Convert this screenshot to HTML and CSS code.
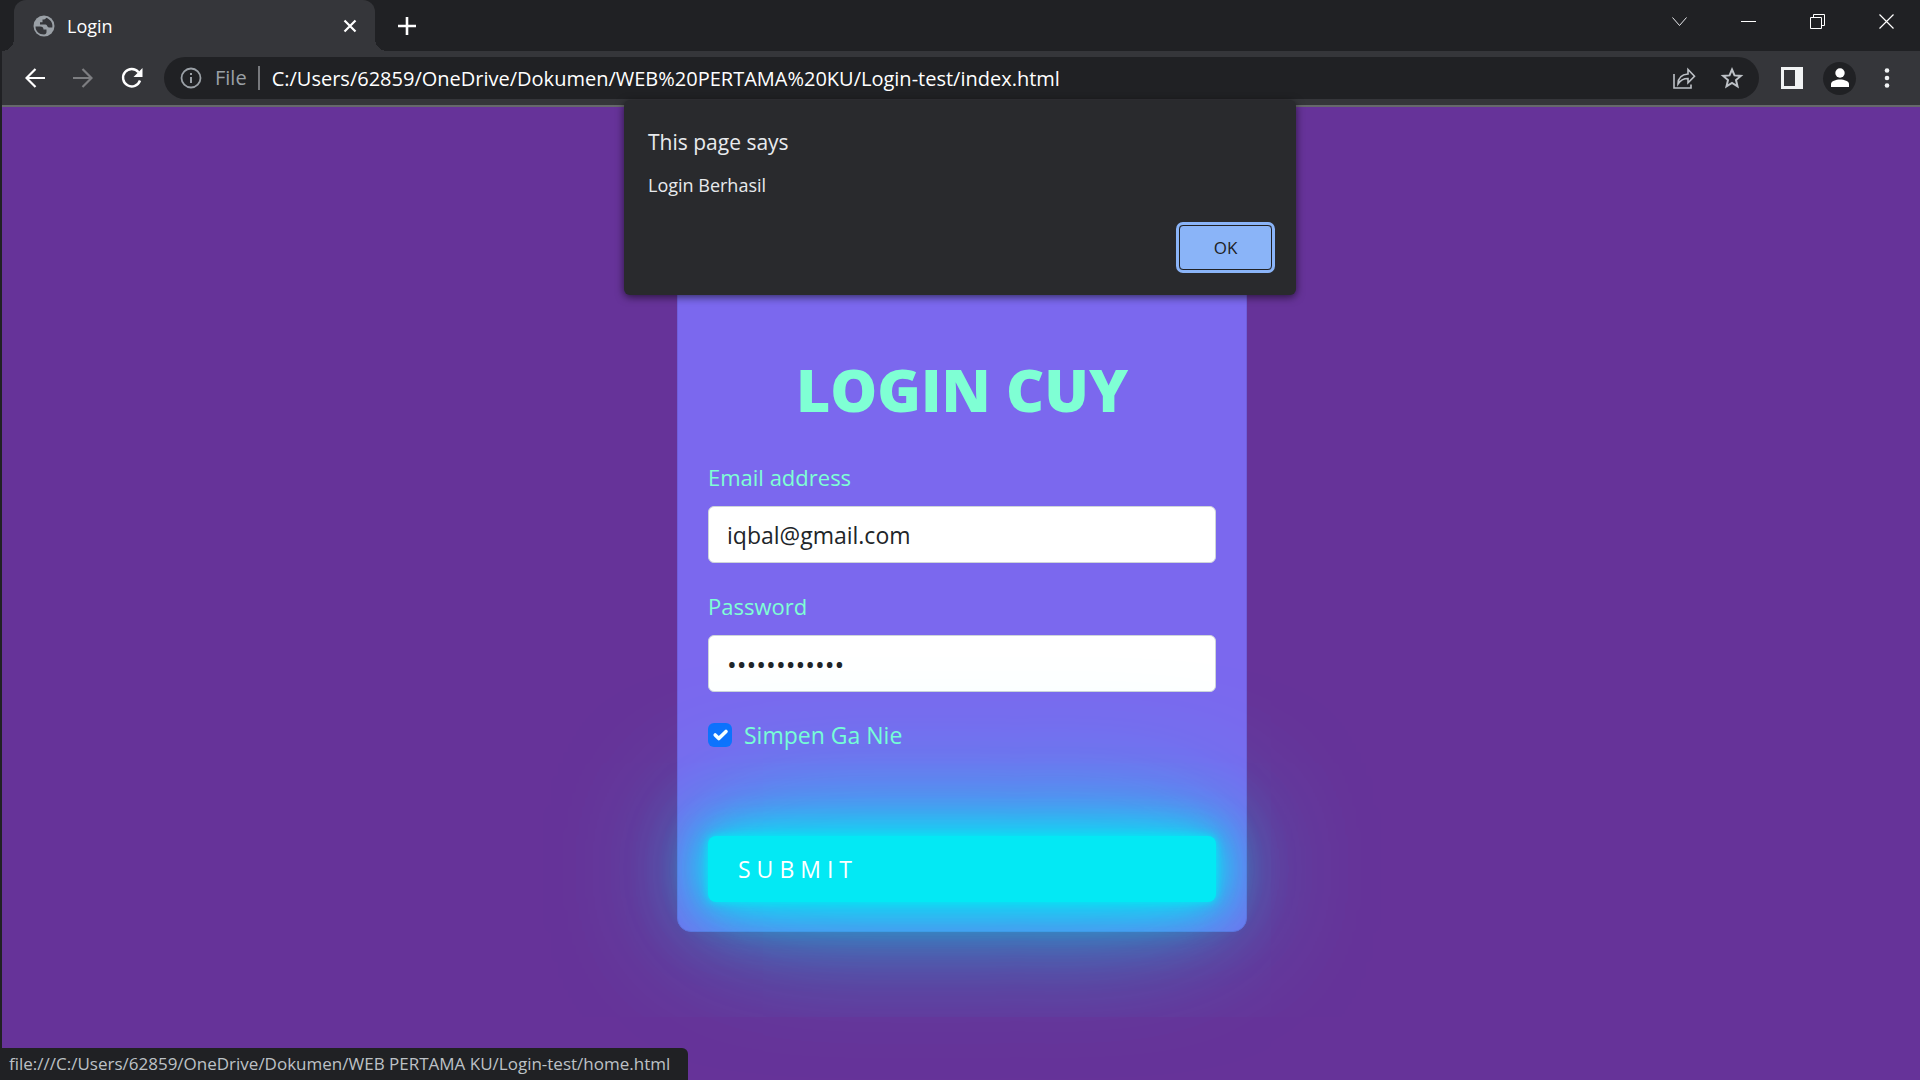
FILE: index.html
```html
<!DOCTYPE html>
<html lang="id">
<head>
<meta charset="utf-8">
<meta name="viewport" content="width=device-width, initial-scale=1">
<title>Login</title>
<link rel="stylesheet" href="styles.css">
</head>
<body>
<div class="window">
  <header class="chrome">
    <div class="tab-strip">
      <div class="tab">
        <svg class="tab-globe" viewBox="0 0 22 22" width="22" height="22" aria-hidden="true"><circle cx="11" cy="11" r="10.500" fill="#9aa0a6"/><path d="M2.500 11.500h4.500c2.500 0 3.500 1 3.500 3h3v2.500c0 1.500-1 2.500-2.500 2.500-5 0-8.500-3.500-8.500-8zM13 2.800c-.3 1.700-1.500 1.700-3.500 1.700v2.800H7v2.200h5.500c2 0 1.500 3 3.500 3h3.300C20.300 8 17 4 13 2.800z" fill="#35363a"/></svg>
        <span class="tab-title">Login</span>
        <button class="icon-button tab-close" aria-label="Close tab"><svg viewBox="0 0 14 14" width="14" height="14"><path d="M1.500 1.500l11 11M12.500 1.500l-11 11" stroke="#fff" stroke-width="2.200"/></svg></button>
      </div>
      <button class="icon-button new-tab" aria-label="New tab"><svg viewBox="0 0 18 18" width="18" height="18"><path d="M9 0v18M0 9h18" stroke="#fff" stroke-width="2.600"/></svg></button>
      <div class="window-controls">
        <button class="icon-button" aria-label="Search tabs"><svg viewBox="0 0 15 15" width="15" height="15"><path d="M.5 3.500l7 8 7-8" fill="none" stroke="#e8eaed"/></svg></button>
        <button class="icon-button" aria-label="Minimize"><svg viewBox="0 0 15 15" width="15" height="15"><path d="M0 7.500h15" stroke="#fff"/></svg></button>
        <button class="icon-button" aria-label="Restore"><svg viewBox="0 0 15 15" width="15" height="15"><path d="M.5 3.500h11v11H.5zM3.500 3.500v-3h11v11h-3" fill="none" stroke="#fff"/></svg></button>
        <button class="icon-button" aria-label="Close"><svg viewBox="0 0 15 15" width="15" height="15"><path d="M.5.5l14 14M14.500.5l-14 14" stroke="#fff" stroke-width="1.200"/></svg></button>
      </div>
    </div>
    <div class="toolbar">
      <nav class="history">
        <button class="icon-button" aria-label="Back"><svg viewBox="0 0 20 20" width="20" height="20"><path d="M20 10H2M10.500 1L1.500 10l9 9" fill="none" stroke="#fff" stroke-width="2.200"/></svg></button>
        <button class="icon-button" aria-label="Forward"><svg viewBox="0 0 20 20" width="20" height="20"><path d="M0 10h18M9.500 1l9 9-9 9" fill="none" stroke="#7d7e81" stroke-width="2.200"/></svg></button>
        <button class="icon-button" aria-label="Reload"><svg viewBox="0 0 22 22" width="22" height="22"><path d="M19 13.500a8.700 8.700 0 1 1-1.500-8.300" fill="none" stroke="#fff" stroke-width="2.400"/><path d="M21.500 1v9h-9z" fill="#fff"/></svg></button>
      </nav>
      <div class="address-bar">
        <svg viewBox="0 0 22 22" width="22" height="22" aria-hidden="true"><circle cx="11" cy="11" r="9.500" fill="none" stroke="#9aa0a6" stroke-width="1.800"/><path d="M11 10v6M11 6v2" stroke="#9aa0a6" stroke-width="2"/></svg>
        <span class="scheme">File</span>
        <input class="address" type="text" aria-label="Address" value="C:/Users/62859/OneDrive/Dokumen/WEB%20PERTAMA%20KU/Login-test/index.html">
        <button class="icon-button" aria-label="Share"><svg viewBox="0 0 24 24" width="24" height="24"><path d="M2 8v14h17v-3.500" fill="none" stroke="#bdc1c6" stroke-width="1.600"/><path d="M6 18c0-6 4-9.500 10-10V3.500l6.500 6.700-6.500 6.600V12.500c-4.500 0-7.500 1.500-10 5.500z" fill="none" stroke="#bdc1c6" stroke-width="1.600"/></svg></button>
        <button class="icon-button" aria-label="Bookmark"><svg viewBox="0 0 24 24" width="24" height="24"><path d="M12 3.500l2.500 5.900 6.400.5-4.900 4.200 1.500 6.200-5.500-3.300-5.500 3.300L8 14.100 3.100 9.900l6.400-.5z" fill="none" stroke="#bdc1c6" stroke-width="2"/></svg></button>
      </div>
      <div class="actions">
        <button class="icon-button" aria-label="Side panel"><svg viewBox="0 0 22 22" width="22" height="22"><path fill="#f1f3f4" fill-rule="evenodd" d="M0 0h22v22H0zM3 3v16h11V3z"/></svg></button>
        <button class="icon-button profile" aria-label="Profile"><svg viewBox="0 0 20 20" width="20" height="20"><circle cx="10" cy="5" r="4.700" fill="#fff"/><path d="M1 19v-3c0-3 5-4.500 9-4.500s9 1.500 9 4.500v3z" fill="#fff"/></svg></button>
        <button class="icon-button menu" aria-label="Menu"><svg viewBox="0 0 6 20" width="6" height="20"><g fill="#f1f3f4"><circle cx="3" cy="2.500" r="2.300"/><circle cx="3" cy="10" r="2.300"/><circle cx="3" cy="17.500" r="2.300"/></g></svg></button>
      </div>
    </div>
  </header>

  <main class="page">
    <form class="card">
      <h1 class="card-title">LOGIN CUY</h1>
      <div class="field">
        <label for="email">Email address</label>
        <input id="email" class="control" type="email" value="iqbal@gmail.com">
      </div>
      <div class="field">
        <label for="password">Password</label>
        <input id="password" class="control password" type="password" value="rahasia12345">
      </div>
      <div class="check">
        <input id="remember" type="checkbox" checked>
        <label for="remember">Simpen Ga Nie</label>
      </div>
      <button class="submit" type="button">SUBMIT</button>
    </form>
  </main>

  <div class="dialog" role="dialog" aria-labelledby="dialog-title">
    <h2 id="dialog-title">This page says</h2>
    <p>Login Berhasil</p>
    <button class="ok">OK</button>
  </div>

  <div class="status">file:///C:/Users/62859/OneDrive/Dokumen/WEB PERTAMA KU/Login-test/home.html</div>
</div>
</body>
</html>
```
FILE: styles.css
```css
* {
  box-sizing: border-box;
}

body {
  margin: 0;
  background: #202124;
  font-family: "Open Sans", "Noto Sans", sans-serif;
}

button,
input {
  font: inherit;
}

svg {
  display: block;
}

.window {
  position: relative;
  display: flex;
  flex-direction: column;
  min-height: 100vh;
}

.icon-button {
  display: flex;
  align-items: center;
  justify-content: center;
  padding: 0;
  border: 0;
  background: none;
}

/* Browser frame */
.chrome {
  margin-left: 2px;
  border-bottom: 2px solid #66686b;
}

.tab-strip {
  display: flex;
  height: 51px;
  padding-left: 12px;
}

.tab {
  position: relative;
  display: flex;
  align-items: center;
  gap: 12px;
  width: 361px;
  padding: 0 18px 0 19px;
  border-radius: 12px 12px 0 0;
  background: #35363a;
}

.tab::before,
.tab::after {
  content: "";
  position: absolute;
  bottom: 0;
  width: 12px;
  height: 12px;
}

.tab::before {
  right: 100%;
  background: radial-gradient(circle at 0 0, transparent 12px, #35363a 12px);
}

.tab::after {
  left: 100%;
  background: radial-gradient(circle at 100% 0, transparent 12px, #35363a 12px);
}

.tab-title {
  flex: 1;
  color: #fff;
  font-size: 18px;
}

.new-tab {
  margin-left: 23px;
}

.window-controls {
  display: flex;
  gap: 54px;
  height: 43px;
  margin-left: auto;
  padding-right: 26px;
}

.toolbar {
  display: flex;
  align-items: center;
  height: 54px;
  background: #35363a;
}

.history {
  display: flex;
  gap: 28px;
  padding: 0 21px 0 23px;
}

.address-bar {
  display: flex;
  flex: 1;
  align-items: center;
  gap: 24px;
  height: 42px;
  padding: 0 15px 0 16px;
  border-radius: 21px;
  background: #202124;
}

.scheme {
  margin-left: -11px;
  padding-right: 11px;
  border-right: 2px solid #77797d;
  color: #9aa0a6;
  font-size: 20px;
  line-height: 24px;
}

.address {
  flex: 1;
  min-width: 0;
  margin-left: -12px;
  padding: 0;
  border: 0;
  background: none;
  color: #fff;
  font-size: 20px;
}

.actions {
  display: flex;
  align-items: center;
  gap: 20px;
  padding: 0 22px;
}

.profile {
  width: 33px;
  height: 33px;
  border-radius: 50%;
  background: #202124;
}

.menu {
  width: 22px;
}

/* Login page */
.page {
  display: flex;
  flex: 1;
  align-items: flex-start;
  justify-content: center;
  overflow: hidden;
  margin-left: 2px;
  padding: 124px 0 0 2px;
  background: #663399;
}

.card {
  display: flex;
  flex-direction: column;
  width: 570px;
  padding: 121px 30px 29px;
  border: 1px solid #6f5fdb;
  border-radius: 14px;
  background: #7b68ee;
  color: #7fffd4;
  font-size: 23px;
  line-height: 36px;
}

.card-title {
  margin: 0 0 34px;
  font-size: 59px;
  font-weight: 800;
  line-height: 72px;
  text-align: center;
}

.field {
  display: flex;
  flex-direction: column;
  gap: 11px;
  margin-bottom: 25px;
}

.field label {
  font-size: 22px;
}

.control {
  height: 57px;
  padding: 0 18px;
  border: 1px solid #ced4da;
  border-radius: 6px;
  background: #fff;
  color: #212529;
}

.password {
  font-size: 26px;
}

.check {
  display: flex;
  align-items: center;
  gap: 12px;
  margin-bottom: 83px;
}

.check input {
  width: 24px;
  height: 24px;
  margin: 0;
  border-radius: 6px;
  appearance: none;
  background: #0d6efd url("data:image/svg+xml,%3Csvg xmlns='http://www.w3.org/2000/svg' viewBox='0 0 20 20'%3E%3Cpath fill='none' stroke='%23fff' stroke-linecap='round' stroke-linejoin='round' stroke-width='3' d='M6 10l3 3 6-6'/%3E%3C/svg%3E") center / 24px;
}

.submit {
  position: relative;
  height: 66px;
  padding: 0 30px;
  border: 0;
  border-radius: 8px;
  background: #03e9f4;
  box-shadow: 0 0 8px #03e9f4, 0 0 38px #03e9f4, 0 0 75px #03e9f4, 0 0 150px #03e9f4;
  color: #fff;
  letter-spacing: 6px;
  text-align: left;
}

/* Overlays */
.dialog {
  position: absolute;
  top: 100px;
  left: 50%;
  display: flex;
  flex-direction: column;
  width: 672px;
  padding: 26px 24px 25px;
  border-radius: 6px;
  background: #292a2d;
  box-shadow: 0 2px 8px rgba(0, 0, 0, 0.6);
  color: #e8eaed;
  transform: translateX(-50%);
}

.dialog h2 {
  margin: 0 0 14px;
  font-size: 21px;
  font-weight: 400;
  line-height: 32px;
}

.dialog p {
  margin: 0 0 27px;
  font-size: 18px;
  line-height: 26px;
}

.ok {
  align-self: flex-end;
  width: 93px;
  height: 45px;
  border: 1px solid #202124;
  border-radius: 4px;
  outline: 3px solid #8ab4f8;
  background: #8ab4f8;
  color: #202124;
  font-size: 17px;
}

.status {
  position: absolute;
  bottom: 0;
  left: 0;
  padding: 0 18px 0 9px;
  border-radius: 0 6px 0 0;
  background: #202124;
  color: #bdc1c6;
  font-size: 17px;
  line-height: 32px;
}
```
